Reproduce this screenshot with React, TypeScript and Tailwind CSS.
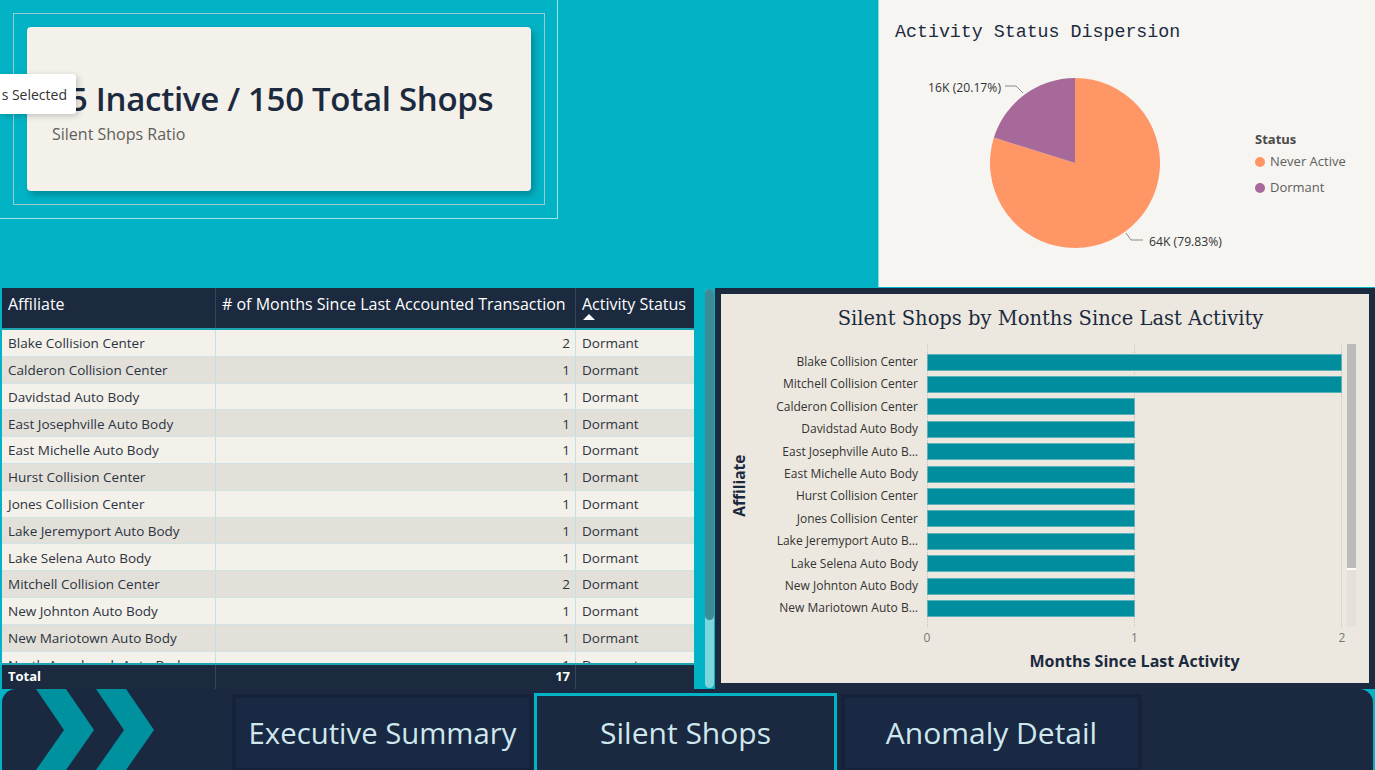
import React from "react";

const tableRows: [string, number][] = [
  ["Blake Collision Center", 2],
  ["Calderon Collision Center", 1],
  ["Davidstad Auto Body", 1],
  ["East Josephville Auto Body", 1],
  ["East Michelle Auto Body", 1],
  ["Hurst Collision Center", 1],
  ["Jones Collision Center", 1],
  ["Lake Jeremyport Auto Body", 1],
  ["Lake Selena Auto Body", 1],
  ["Mitchell Collision Center", 2],
  ["New Johnton Auto Body", 1],
  ["New Mariotown Auto Body", 1],
  ["North Annaburgh Auto Body", 1],
];

const barRows: [string, number][] = [
  ["Blake Collision Center", 2],
  ["Mitchell Collision Center", 2],
  ["Calderon Collision Center", 1],
  ["Davidstad Auto Body", 1],
  ["East Josephville Auto B…", 1],
  ["East Michelle Auto Body", 1],
  ["Hurst Collision Center", 1],
  ["Jones Collision Center", 1],
  ["Lake Jeremyport Auto B…", 1],
  ["Lake Selena Auto Body", 1],
  ["New Johnton Auto Body", 1],
  ["New Mariotown Auto B…", 1],
];

function Pie() {
  return (
    <svg width="360" height="244" viewBox="0 0 360 244">
      <path d="M196,119 L196,34 A85,85 0 1,1 114.9,93.6 Z" fill="#FE9666" />
      <path d="M196,119 L196,34 A85,85 0 0,0 114.9,93.6 Z" fill="#A66999" />
      <polyline points="126,42 137,42 144,49" fill="none" stroke="#8a8a8a" strokeWidth="1" />
      <polyline points="247,189 252,196 264,196" fill="none" stroke="#8a8a8a" strokeWidth="1" />
      <text x="122" y="48" textAnchor="end" fontSize="12.2" fill="#333" fontFamily="'Open Sans',sans-serif">16K (20.17%)</text>
      <text x="270" y="202" fontSize="12.2" fill="#333" fontFamily="'Open Sans',sans-serif">64K (79.83%)</text>
    </svg>
  );
}

export default function App() {
  return (
    <div className="w-[1375px] h-[770px] overflow-hidden bg-[#02B3C5] flex flex-col font-['Open_Sans',sans-serif] relative">
      {/* top row */}
      <div className="h-[288px] flex shrink-0">
        <div className="w-[878px] relative">
          <div className="w-[558px] h-[219px] border-r border-b border-[#a6e0e6] pl-[13px] pt-[13px]">
            <div className="w-[532px] h-[192px] border border-[#9fc9cd] p-[13px]">
              <div className="w-[504px] h-[164px] bg-[#F4F0EA] rounded-[4px] shadow-[3px_4px_6px_rgba(0,60,70,0.35)] pt-[52px]">
                <div className="pl-[42px] text-[33px] leading-[40px] font-semibold text-[#1B2A3E] tracking-[-0.3px] whitespace-nowrap">5 Inactive / 150 Total Shops</div>
                <div className="pl-[25px] text-[16px] leading-[22px] text-[#605E5C] mt-[4px]">Silent Shops Ratio</div>
              </div>
            </div>
          </div>
          <div className="absolute left-0 top-[74px] w-[76px] h-[40px] bg-white rounded-r-[3px] shadow-[2px_2px_6px_rgba(0,0,0,0.2)] flex items-center justify-end pr-[9px] text-[14px] text-[#333]">
            s Selected
          </div>
        </div>
        <div className="w-[497px] h-[287px] bg-[#F6F5F2] border-l border-[#8fd8df] flex flex-col">
          <div className="pl-[16px] pt-[20px] h-[44px] text-[18.3px] leading-[24px] text-[#1B2A3E] font-['Liberation_Mono',monospace]">Activity Status Dispersion</div>
          <div className="flex">
            <Pie />
            <div className="ml-[16px] pt-[85px] flex flex-col">
              <div className="h-[20px] leading-[20px] text-[13px] font-bold text-[#4a4a4a]">Status</div>
              <div className="h-[26px] flex items-center gap-[5px] text-[13px] text-[#605E5C]">
                <span className="w-[10px] h-[10px] rounded-full bg-[#FE9666]" />Never Active
              </div>
              <div className="h-[26px] flex items-center gap-[5px] text-[13px] text-[#605E5C]">
                <span className="w-[10px] h-[10px] rounded-full bg-[#A66999]" />Dormant
              </div>
            </div>
          </div>
        </div>
      </div>

      {/* middle row */}
      <div className="h-[401px] flex shrink-0">
        {/* table */}
        <div className="ml-[2px] w-[692px] h-[401px] flex flex-col">
          <div className="h-[42px] bg-[#1B2A3E] border-b-2 border-[#1EA3B1] flex text-white text-[16px] leading-[22px]">
            <div className="w-[213px] pl-[6px] pt-[5px]">Affiliate</div>
            <div className="w-[360px] pl-[6px] pt-[5px] border-l border-[#2c4a5a] whitespace-nowrap">
              # of Months Since Last Accounted Transaction
            </div>
            <div className="w-[119px] pl-[6px] pt-[5px] border-l border-[#2c4a5a] flex flex-col whitespace-nowrap">
              <span>Activity Status</span>
              <span className="w-0 h-0 ml-[1px] mt-[-1px] border-l-[6px] border-r-[6px] border-b-[6px] border-l-transparent border-r-transparent border-b-white" />
            </div>
          </div>
          <div className="h-[333px] overflow-hidden">
            {tableRows.map(([name, v], i) => (
              <div
                key={name}
                className={`h-[26.8px] flex border-b border-[#cfe3e2] text-[13.5px] text-[#2b3440] ${i % 2 === 0 ? "bg-[#F4F0EA]" : "bg-[#E3E0DA]"}`}
              >
                <div className="w-[213px] pl-[6px] pt-[1px] flex items-center whitespace-nowrap">{name}</div>
                <div className="w-[360px] pr-[5px] pt-[1px] flex items-center justify-end border-l border-[#bfe2e4]">{v}</div>
                <div className="w-[119px] pl-[6px] pt-[1px] flex items-center border-l border-[#bfe2e4]">Dormant</div>
              </div>
            ))}
          </div>
          <div className="h-[26px] bg-[#1B2A3E] border-t-2 border-[#1EA3B1] flex text-white text-[13px] font-bold">
            <div className="w-[213px] pl-[6px] flex items-center">Total</div>
            <div className="w-[360px] pr-[5px] flex items-center justify-end border-l border-[#2c4a5a]">17</div>
            <div className="w-[119px] border-l border-[#2c4a5a]" />
          </div>
        </div>
        {/* table scrollbar */}
        <div className="ml-[11px] w-[9px] h-[399px] mt-[1px] rounded-full bg-[#7DD6DE] flex flex-col">
          <div className="h-[331px] rounded-full bg-[#3B8C97]" />
        </div>
        {/* bar chart */}
        <div className="ml-[1px] w-[660px] h-[401px] border-[6px] border-[#1B2A3E] bg-[#ECE8DF] flex flex-col">
          <div className="h-[50px] pt-[12px] pl-[11px] text-center font-['DejaVu_Serif',serif] text-[19.5px] leading-[26px] text-[#1B2A3E]">
            Silent Shops by Months Since Last Activity
          </div>
          <div className="h-[283px] flex">
            <div className="w-[38px] flex items-center justify-center">
              <div className="-rotate-90 whitespace-nowrap text-[15.5px] font-bold text-[#1B2A3E]">Affiliate</div>
            </div>
            <div className="w-[168px] pr-[9px] pt-[7px] flex flex-col">
              {barRows.map(([n]) => (
                <div key={n} className="h-[22.4px] leading-[22.4px] text-right text-[12px] text-[#333] whitespace-nowrap">{n}</div>
              ))}
            </div>
            <div className="w-[415px] relative pt-[7px] flex flex-col">
              <div className="absolute left-0 top-0 bottom-0 border-l border-dotted border-[#c9c5bd]" />
              <div className="absolute left-[207px] top-0 bottom-0 border-l border-dotted border-[#c9c5bd]" />
              <div className="absolute right-0 top-0 bottom-0 border-l border-dotted border-[#c9c5bd]" />
              {barRows.map(([n, v]) => (
                <div key={n} className="h-[22.4px] flex items-center relative">
                  <div className="h-[17px] bg-[#008E9E] border border-[#5bb2bb]" style={{ width: `${(v / 2) * 415}px` }} />
                </div>
              ))}
            </div>
            <div className="ml-[5px] w-[9px] flex flex-col">
              <div className="h-[226px] bg-[#BDBBB7] border-b-2 border-white" />
              <div className="h-[57px] bg-[#E4E1DA]" />
            </div>
          </div>
          <div className="h-[22px] ml-[202px] w-[423px] flex justify-between items-center text-[12px] text-[#777]">
            <span className="w-[8px] text-center">0</span>
            <span className="w-[8px] text-center">1</span>
            <span className="w-[8px] text-center">2</span>
          </div>
          <div className="h-[24px] ml-[206px] w-[415px] text-center leading-[24px] text-[16px] font-bold text-[#1B2A3E] whitespace-nowrap">
            Months Since Last Activity
          </div>
        </div>
      </div>

      {/* nav */}
      <div className="mx-[2px] h-[81px] bg-[#1A2840] rounded-t-[14px] flex items-start overflow-hidden shrink-0">
        <svg width="120" height="81" viewBox="0 0 120 81" className="ml-[34px] shrink-0">
          <polygon points="0,0 30,0 58,41 30,81 0,81 28,41" fill="#00919F" />
          <polygon points="60,0 90,0 118,41 90,81 60,81 88,41" fill="#00919F" />
        </svg>
        <div className="ml-[76px] mt-[5px] w-[301px] h-[78px] pb-[1px] bg-[#192843] border-[4px] border-[#15223A] flex items-center justify-center text-[29.3px] leading-[40px] text-[#CFE7EE] whitespace-nowrap">
          Executive Summary
        </div>
        <div className="ml-[1px] mt-[4px] w-[303px] h-[80px] bg-[#1A2840] border-[3px] border-[#00B3C6] flex items-center justify-center text-[30px] leading-[40px] text-[#CFE7EE] whitespace-nowrap">
          Silent Shops
        </div>
        <div className="ml-[4px] mt-[5px] w-[301px] h-[78px] pb-[1px] bg-[#192843] border-[4px] border-[#15223A] flex items-center justify-center text-[30px] leading-[40px] text-[#CFE7EE] whitespace-nowrap">
          Anomaly Detail
        </div>
      </div>
    </div>
  );
}
